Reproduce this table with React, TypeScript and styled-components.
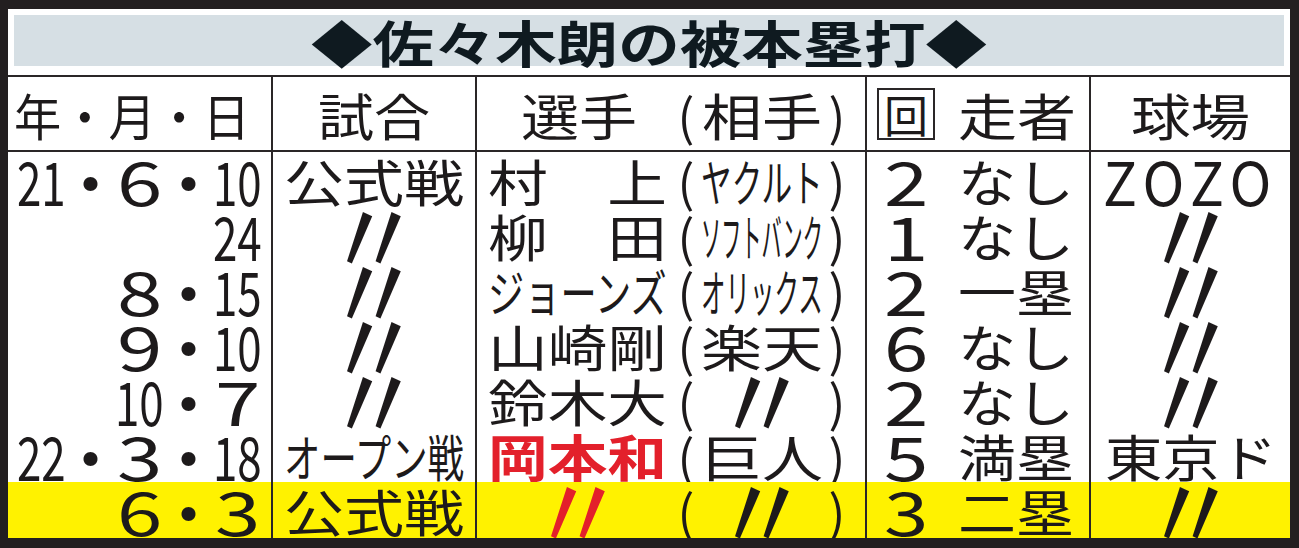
import React, { useLayoutEffect, useRef, useState } from "react";
import styled, { createGlobalStyle, css } from "styled-components";

const INK = "#1d1a1b";
const LINE = "#2a2627";
const RED = "#e3202b";
const YELLOW = "#fff200";

const GlobalStyle = createGlobalStyle`
  html, body {
    margin: 0;
    padding: 0;
    background: #fff;
    overflow: hidden;
  }
  body {
    font-family: "Noto Sans CJK JP", "Noto Sans", sans-serif;
    color: ${INK};
  }
`;

const Frame = styled.div`
  box-sizing: border-box;
  width: 1299px;
  height: 548px;
  border-style: solid;
  border-color: #231f20;
  border-width: 9px 9px 10px 8px;
  background: #fff;
  display: flex;
  flex-direction: column;
  overflow: hidden;
`;

const TitleBand = styled.div`
  margin: 6px 6px 9px 6px;
  height: 51px;
  background: #d6dfe4;
  display: flex;
  align-items: center;
  justify-content: center;
  color: #0f1a20;
  font-size: 50px;
  font-weight: 700;
  line-height: 1;
`;

const Table = styled.div`
  flex: 1;
  display: grid;
  grid-template-columns: 263px 204px 390px 224px 1fr;
  grid-template-rows: 77px repeat(6, 55px) 1fr;
`;

const Cell = styled.div<{
  $first?: boolean;
  $head?: boolean;
  $hl?: boolean;
  $justify?: string;
  $pl?: number;
  $pr?: number;
}>`
  box-sizing: border-box;
  display: flex;
  align-items: center;
  justify-content: ${(p) => p.$justify ?? "center"};
  padding-left: ${(p) => p.$pl ?? 0}px;
  padding-right: ${(p) => p.$pr ?? 0}px;
  border-left: ${(p) => (p.$first ? "none" : `2px solid ${LINE}`)};
  background: ${(p) => (p.$hl ? YELLOW : "transparent")};
  font-size: 50px;
  line-height: 1;
  white-space: nowrap;
  min-height: 0;
  ${(p) =>
    p.$head &&
    css`
      border-top: 2px solid ${LINE};
      border-bottom: 2px solid ${LINE};
    `}
`;

const FitBox = styled.span<{ $w: number }>`
  display: inline-flex;
  flex: none;
  width: ${(p) => p.$w}px;
  height: 48px;
  justify-content: flex-start;
  align-items: center;
`;

const Ink = styled.span`
  flex: none;
  display: inline-block;
  transform-origin: 0 50%;
  white-space: nowrap;
`;

const Num = styled.span<{ $spread?: boolean }>`
  font-size: 60px;
  letter-spacing: ${(p) => (p.$spread ? "0.12em" : "0")};
`;

const Red = styled.span`
  color: ${RED};
  font-weight: 700;
`;

const Gap = styled.span<{ $w: number }>`
  display: inline-block;
  flex: none;
  width: ${(p) => p.$w}px;
`;

const DateSeg = styled.span`
  display: inline-flex;
  flex: none;
  width: 49px;
  justify-content: center;
  align-items: center;
`;

const Dot = styled.span`
  display: inline-flex;
  flex: none;
  width: 49px;
  height: 40px;
  align-items: center;
  justify-content: center;
  font-size: 66px;
`;

const Slot = styled.span<{ $w: number }>`
  display: inline-flex;
  flex: none;
  width: ${(p) => p.$w}px;
  height: 48px;
  justify-content: center;
  align-items: center;
`;

const Paren = styled.span`
  display: inline-flex;
  flex: none;
  width: 26px;
  height: 48px;
  align-items: center;
  justify-content: center;
  font-size: 50px;
`;

const DittoMark = styled.span<{ $red?: boolean }>`
  display: inline-flex;
  flex: none;
  width: 48px;
  height: 44px;
  align-items: center;
  justify-content: center;
  font-size: 104px;
  line-height: 1;
  color: ${(p) => (p.$red ? RED : INK)};
  transform: translateY(-3px) scaleX(0.95);
`;

const InningMark = styled.span`
  box-sizing: border-box;
  display: inline-flex;
  flex: none;
  width: 58px;
  height: 52px;
  border: 2px solid ${LINE};
  align-items: center;
  justify-content: center;
  font-size: 44px;
`;

function Fit({ w, children }: { w: number; children: React.ReactNode }) {
  const ref = useRef<HTMLSpanElement>(null);
  const [k, setK] = useState(1);
  useLayoutEffect(() => {
    const measure = () => {
      const el = ref.current;
      if (el && el.offsetWidth) setK(w / el.offsetWidth);
    };
    measure();
    if (document.fonts) document.fonts.ready.then(measure);
  }, [w]);
  return (
    <FitBox $w={w}>
      <Ink ref={ref} style={{ transform: `scaleX(${k})` }}>
        {children}
      </Ink>
    </FitBox>
  );
}

const Ditto = ({ red }: { red?: boolean }) => <DittoMark $red={red}>〃</DittoMark>;

type Row = {
  date: string[];
  game: string;
  name: string;
  red?: boolean;
  team: string;
  inning: string;
  runner: string;
  park: string;
  hl?: boolean;
};

const rows: Row[] = [
  { date: ["21", "・", "6", "・", "10"], game: "公式戦", name: "村　上", team: "ヤクルト", inning: "2", runner: "なし", park: "ZOZO" },
  { date: ["24"], game: "〃", name: "柳　田", team: "ソフトバンク", inning: "1", runner: "なし", park: "〃" },
  { date: ["8", "・", "15"], game: "〃", name: "ジョーンズ", team: "オリックス", inning: "2", runner: "一塁", park: "〃" },
  { date: ["9", "・", "10"], game: "〃", name: "山崎剛", team: "楽天", inning: "6", runner: "なし", park: "〃" },
  { date: ["10", "・", "7"], game: "〃", name: "鈴木大", team: "〃", inning: "2", runner: "なし", park: "〃" },
  { date: ["22", "・", "3", "・", "18"], game: "オープン戦", name: "岡本和", red: true, team: "巨人", inning: "5", runner: "満塁", park: "東京ド" },
  { date: ["6", "・", "3"], game: "公式戦", name: "〃", red: true, team: "〃", inning: "3", runner: "二塁", park: "〃", hl: true },
];

function DateValue({ segs }: { segs: string[] }) {
  return (
    <>
      {segs.map((s, i) =>
        s === "・" ? (
          <Dot key={i}>・</Dot>
        ) : (
          <DateSeg key={i}>
            <Fit w={s.length === 2 ? 49 : 45}>
              <Num>{s}</Num>
            </Fit>
          </DateSeg>
        )
      )}
    </>
  );
}

function TeamValue({ children }: { children: React.ReactNode }) {
  return (
    <>
      <Paren>(</Paren>
      <Slot $w={125}>{children}</Slot>
      <Paren>)</Paren>
    </>
  );
}

function DataRow({ r }: { r: Row }) {
  return (
    <>
      <Cell $first $hl={r.hl} $justify="flex-end" $pr={9}>
        <DateValue segs={r.date} />
      </Cell>
      <Cell $hl={r.hl}>{r.game === "〃" ? <Ditto /> : <Fit w={180}>{r.game}</Fit>}</Cell>
      <Cell $hl={r.hl} $justify="flex-start" $pl={11}>
        <Slot $w={179}>
          {r.name === "〃" ? (
            <Ditto red />
          ) : (
            <Fit w={179}>{r.red ? <Red>{r.name}</Red> : r.name}</Fit>
          )}
        </Slot>
        <Gap $w={6} />
        <TeamValue>{r.team === "〃" ? <Ditto /> : <Fit w={122}>{r.team}</Fit>}</TeamValue>
      </Cell>
      <Cell $hl={r.hl} $justify="flex-start" $pl={10}>
        <Slot $w={58}>
          <Fit w={44}>
            <Num>{r.inning}</Num>
          </Fit>
        </Slot>
        <Gap $w={23} />
        <Fit w={116}>{r.runner}</Fit>
      </Cell>
      <Cell $hl={r.hl}>
        {r.park === "〃" ? (
          <Ditto />
        ) : r.park === "ZOZO" ? (
          <Fit w={175}>
            <Num $spread>{r.park}</Num>
          </Fit>
        ) : (
          <Fit w={172}>{r.park}</Fit>
        )}
      </Cell>
    </>
  );
}

export default function App() {
  return (
    <>
      <GlobalStyle />
      <Frame>
        <TitleBand>
          <Fit w={676}>◆佐々木朗の被本塁打◆</Fit>
        </TitleBand>
        <Table>
          <Cell $first $head $justify="flex-start" $pl={6}>
            <Fit w={236}>年・月・日</Fit>
          </Cell>
          <Cell $head>
            <Fit w={112}>試合</Fit>
          </Cell>
          <Cell $head $justify="flex-start" $pl={44}>
            <Fit w={116}>選手</Fit>
            <Gap $w={36} />
            <TeamValue>
              <Fit w={120}>相手</Fit>
            </TeamValue>
          </Cell>
          <Cell $head $justify="flex-start" $pl={10}>
            <InningMark>回</InningMark>
            <Gap $w={23} />
            <Fit w={118}>走者</Fit>
          </Cell>
          <Cell $head>
            <Fit w={119}>球場</Fit>
          </Cell>
          {rows.map((r, i) => (
            <DataRow key={i} r={r} />
          ))}
        </Table>
      </Frame>
    </>
  );
}
